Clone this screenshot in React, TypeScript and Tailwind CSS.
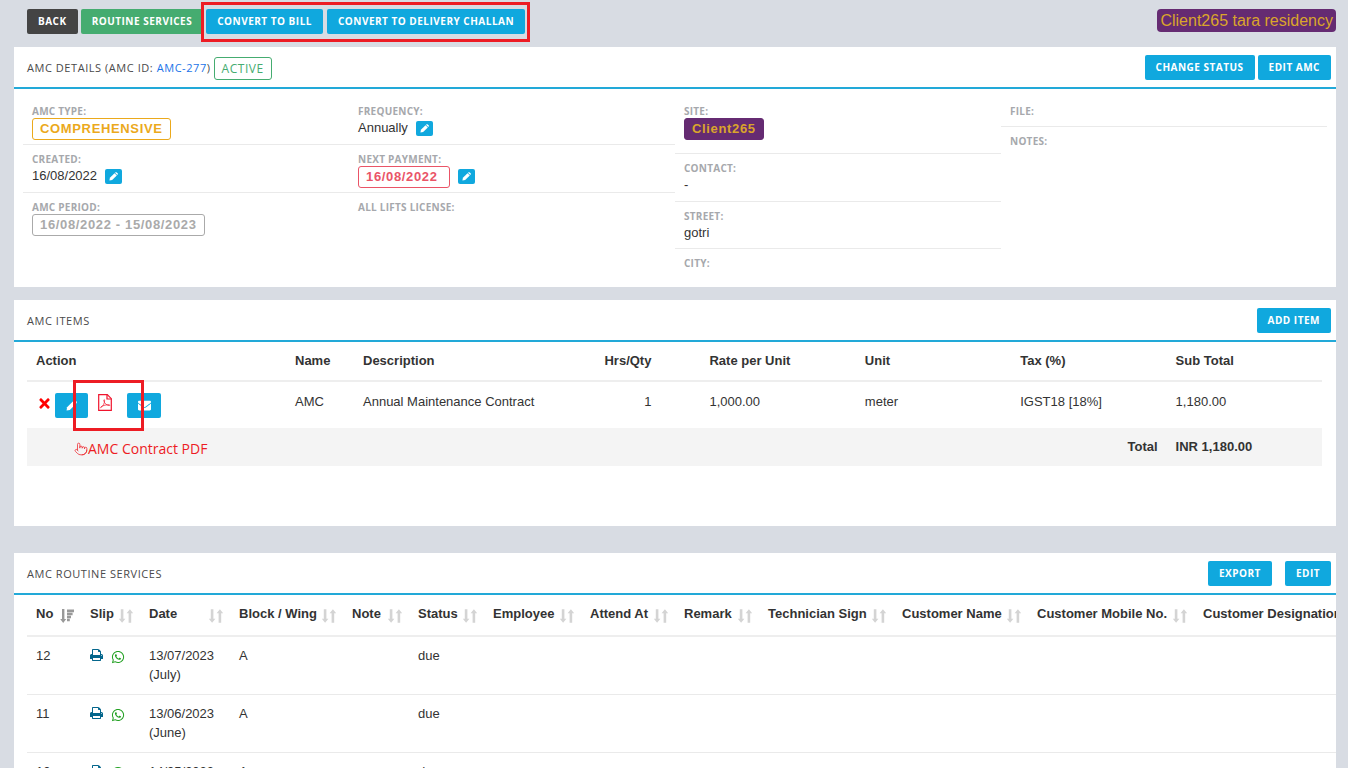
import React from 'react';
import { FaTimes, FaWhatsapp, FaEnvelope } from 'react-icons/fa';
import { Pointer } from 'lucide-react';

const arial = "font-['Liberation_Sans',Arial,sans-serif]";
const open = "font-['Open_Sans',sans-serif]";

function PencilIcon({ className }: { className: string }) {
  return (
    <svg viewBox="0 0 12 12" className={className} fill="currentColor" aria-hidden="true">
      <path d="M0.6 11.4 1.2 7.8 7.4 1.6 10.4 4.6 4.2 10.8Z" />
      <path d="M8 1 8.8 .4Q9.7 -.1 10.3.5L11.5 1.7Q12.1 2.3 11.6 3.2L11 4Z" />
    </svg>
  );
}

function PdfIcon() {
  return (
    <svg viewBox="0 0 14 17" className="h-[17px] w-[14px]" fill="none" stroke="#f0142d" strokeWidth="1.2" aria-hidden="true">
      <path d="M.7.7H9.3L13.3 4.7V16.3H.7Z" />
      <path d="M9 .7V5H13.3" />
      <path d="M2.8 13.6C5 12.4 6.8 9 6.6 6.2 6.5 5.2 5.6 5.6 5.8 6.6 6.2 9 8.4 11.2 11 11.6 12.2 11.7 12 10.7 11 10.7 8.6 10.6 5.2 11.4 3 12.8 2.2 13.4 2.4 13.9 2.8 13.6Z" strokeWidth=".7" />
    </svg>
  );
}

function PrintIcon() {
  return (
    <svg viewBox="0 128 1664 1536" className="h-3 w-[13px]" fill="#04668c" aria-hidden="true">
      <path d="M384 1536h896v-256h-896v256zM384 896h896v-384h-160q-40 0-68-28t-28-68v-160h-640v640zM1536 960q0-26-19-45t-45-19-45 19-19 45 19 45 45 19 45-19 19-45zM1664 960v416q0 13-9.5 22.5t-22.5 9.5h-224v160q0 40-28 68t-68 28h-960q-40 0-68-28t-28-68v-160h-224q-13 0-22.5-9.5t-9.5-22.5v-416q0-79 56.5-135.5t135.5-56.5h64v-544q0-40 28-68t68-28h672q40 0 88 20t76 48l152 152q28 28 48 76t20 88v256h64q79 0 135.5 56.5t56.5 135.5z" />
    </svg>
  );
}

function SortIcon({ active }: { active: boolean }) {
  return active ? (
    <svg viewBox="0 0 14 14" className="h-[14px] w-[14px] shrink-0" fill="#999" aria-hidden="true">
      <path d="M2 0H4.4V10H6.2L3.2 14 .2 10H2Z" />
      <path d="M7 .6H14V3.2H7ZM7 3.8H12.6V6.2H7ZM7 6.8H11V9.2H7ZM7 9.8H9.8V12.2H7Z" />
    </svg>
  ) : (
    <svg viewBox="0 0 14 14" className="h-[14px] w-[14px] shrink-0" fill="#d4d4d4" aria-hidden="true">
      <path d="M1.8 .2H4.4V9.8H6.4L3.1 13.8 -.2 9.8H1.8Z" />
      <path d="M9.6 13.8H12.2V4.2H14.2L10.9.2 7.6 4.2H9.6Z" />
    </svg>
  );
}

function Btn({ children, color = 'bg-[#10a8de]' }: { children: React.ReactNode; color?: string }) {
  return (
    <button type="button" className={`${open} ${color} h-[25px] shrink-0 rounded-xs px-[11px] text-[10px] leading-[25px] font-bold tracking-wider whitespace-nowrap text-white uppercase`}>
      {children}
    </button>
  );
}

function EditBtn({ label }: { label: string }) {
  return (
    <button type="button" aria-label={label} className="mt-[3px] flex h-[15px] w-[17px] items-center justify-center rounded-xs bg-[#10a8de] text-white">
      <PencilIcon className="h-[9px] w-[9px]" />
    </button>
  );
}

function PanelHead({ title, children }: { title: React.ReactNode; children: React.ReactNode }) {
  return (
    <header className="flex h-[42px] items-center justify-between border-b-2 border-[#22a9d8] pr-[5px] pl-[13px]">
      <h2 className={`${open} flex items-center gap-[3px] pt-[2px] text-[11px] tracking-wider text-[#4a4a4a] uppercase`}>{title}</h2>
      {children}
    </header>
  );
}

function Field({ label, children, size = 'h-12' }: { label: string; children?: React.ReactNode; size?: string }) {
  return (
    <div className={`${size} border-b border-[#eaeaea] px-[9px] pt-[7px] last:border-b-0`}>
      <dt className={`${open} text-[10px] leading-[14px] font-bold tracking-wide text-[#a6a8ac] uppercase`}>{label}:</dt>
      <dd className="flex items-start text-[13px] leading-5 text-[#333]">{children}</dd>
    </div>
  );
}

const badge = 'flex h-[22px] items-center rounded-[3px] border px-[7px] pb-[1px] text-[13px] font-bold tracking-wider whitespace-nowrap';

const services = [
  { no: 12, date: '13/07/2023', month: '(July)' },
  { no: 11, date: '13/06/2023', month: '(June)' },
  { no: 10, date: '14/05/2023', month: '(May)' },
];

const serviceColumns = [
  { label: 'No', width: 'w-[54px]' },
  { label: 'Slip', width: 'w-[59px]' },
  { label: 'Date', width: 'w-[90px]' },
  { label: 'Block / Wing', width: 'w-[113px]' },
  { label: 'Note', width: 'w-[66px]' },
  { label: 'Status', width: 'w-[75px]' },
  { label: 'Employee', width: 'w-[97px]' },
  { label: 'Attend At', width: 'w-[94px]' },
  { label: 'Remark', width: 'w-[84px]' },
  { label: 'Technician Sign', width: 'w-[134px]' },
  { label: 'Customer Name', width: 'w-[135px]' },
  { label: 'Customer Mobile No.', width: 'w-[166px]' },
  { label: 'Customer Designation', width: 'w-[170px]' },
];

export default function App() {
  return (
    <main className={`${arial} h-screen overflow-hidden bg-[#d8dce3] pr-3 pl-[14px] text-[13px] text-[#333]`}>
      <div className="flex h-[47px] items-start justify-between pt-[9px] pl-[13px]">
        <nav className="flex gap-[3px]">
          <Btn color="bg-[#444]">Back</Btn>
          <Btn color="bg-[#45ac70]">Routine Services</Btn>
          <div className="relative flex gap-1">
            <Btn>Convert to Bill</Btn>
            <Btn>Convert to Delivery Challan</Btn>
            <span className="pointer-events-none absolute -inset-x-[5px] -top-[7px] -bottom-2 border-3 border-[#ed1c24]" />
          </div>
        </nav>
        <span className="rounded-[4px] bg-[#652b72] px-[3px] text-[16px] leading-[23px] text-[#daa52b]">Client265 tara residency</span>
      </div>

      <section className="bg-white">
        <PanelHead
          title={
            <>
              <span>
                AMC Details (AMC ID: <a href="#amc-277" className="text-[#1a73e8]">AMC-277</a>)
              </span>
              <span className="rounded-[3px] border border-[#45ac70] px-[7px] text-[12px] leading-[21px] text-[#45ac70]">Active</span>
            </>
          }
        >
          <div className="flex gap-[3px]">
            <Btn>Change Status</Btn>
            <Btn>Edit AMC</Btn>
          </div>
        </PanelHead>
        <div className="grid h-[198px] grid-cols-4 px-[9px] pt-2">
          <dl>
            <Field label="AMC Type">
              <span className={`${badge} border-[#eba91c] text-[#eba91c]`}>COMPREHENSIVE</span>
            </Field>
            <Field label="Created">
              <span className="mr-2">16/08/2022</span>
              <EditBtn label="Edit created date" />
            </Field>
            <Field label="AMC Period">
              <span className={`${badge} border-[#aaa] text-[#aaa]`}>16/08/2022 - 15/08/2023</span>
            </Field>
          </dl>
          <dl>
            <Field label="Frequency">
              <span className="mr-2">Annually</span>
              <EditBtn label="Edit frequency" />
            </Field>
            <Field label="Next Payment">
              <span className={`${badge} mr-2 border-[#ea5467] pr-[11px] text-[#ea5467]`}>16/08/2022</span>
              <EditBtn label="Edit next payment" />
            </Field>
            <Field label="All Lifts License" />
          </dl>
          <dl>
            <Field label="Site" size="h-[57px]">
              <span className={`${badge} border-[#652b72] bg-[#652b72] text-[#daa52b]`}>Client265</span>
            </Field>
            <Field label="Contact">-</Field>
            <Field label="Street" size="h-[47px]">gotri</Field>
            <Field label="City" />
          </dl>
          <dl>
            <Field label="File" size="h-[30px]" />
            <Field label="Notes" />
          </dl>
        </div>
      </section>

      <section className="mt-[13px] h-[226px] bg-white">
        <PanelHead title="AMC Items">
          <Btn>Add Item</Btn>
        </PanelHead>
        <div className="pr-[14px] pl-[13px]">
          <table className="w-full table-fixed border-collapse text-left">
            <thead>
              <tr className="h-[39px] border-b-2 border-[#eee] [&>th]:px-[9px]">
                <th className="w-[20%]">Action</th>
                <th className="w-[68px]">Name</th>
                <th>Description</th>
                <th className="w-[12%]"><span className="block pr-10 text-right">Hrs/Qty</span></th>
                <th className="w-[12%]">Rate per Unit</th>
                <th className="w-[12%]">Unit</th>
                <th className="w-[12%]">Tax (%)</th>
                <th className="w-[12%]">Sub Total</th>
              </tr>
            </thead>
            <tbody>
              <tr className="h-[47px] align-top leading-5 [&>td]:px-[9px] [&>td]:pt-[10px]">
                <td>
                  <div className="relative flex items-start pt-px">
                    <button type="button" aria-label="Delete item" className="mt-[3px] mr-[3px] flex w-4 justify-center text-[#f00]"><FaTimes size={15} /></button>
                    <button type="button" aria-label="Edit item" className="flex h-[25px] w-[33px] items-center justify-center rounded-xs bg-[#10a8de] text-white">
                      <PencilIcon className="h-[11px] w-[11px]" />
                    </button>
                    <button type="button" aria-label="AMC contract PDF" className="mt-px mr-[15px] ml-[10px] flex"><PdfIcon /></button>
                    <button type="button" aria-label="Email item" className="flex h-[25px] w-[34px] items-center justify-center rounded-xs bg-[#10a8de] text-white">
                      <FaEnvelope size={13} />
                    </button>
                    <span className="pointer-events-none absolute -top-3 left-[37px] h-[51px] w-[71px] border-3 border-[#ed1c24]" />
                    <span className={`${open} pointer-events-none absolute top-[47px] left-[38px] flex items-center text-[14px] whitespace-nowrap text-[#ed1c24]`}>
                      <Pointer size={14} strokeWidth={1.25} />
                      AMC Contract PDF
                    </span>
                  </div>
                </td>
                <td>AMC</td>
                <td>Annual Maintenance Contract</td>
                <td><span className="block pr-10 text-right">1</span></td>
                <td>1,000.00</td>
                <td>meter</td>
                <td>IGST18 [18%]</td>
                <td>1,180.00</td>
              </tr>
            </tbody>
            <tfoot>
              <tr className="h-[38px] bg-[#f4f4f4] font-bold [&>td]:px-[9px]">
                <td colSpan={7} className="text-right">Total</td>
                <td>INR 1,180.00</td>
              </tr>
            </tfoot>
          </table>
        </div>
      </section>

      <section className="mt-[27px] bg-white">
        <PanelHead title="AMC Routine Services">
          <div className="flex gap-[13px]">
            <Btn>Export</Btn>
            <Btn>Edit</Btn>
          </div>
        </PanelHead>
        <div className="overflow-hidden pl-[13px]">
          <table className="w-full min-w-[1337px] table-fixed border-collapse text-left">
            <thead>
              <tr className="h-[41px] border-b-2 border-[#eee]">
                {serviceColumns.map((column, index) => (
                  <th key={column.label} className={`${column.width} pr-[7px] pb-[2px] pl-[9px] whitespace-nowrap`}>
                    <div className="flex items-center justify-between">
                      <span>{column.label}</span>
                      <span className="pt-1"><SortIcon active={index === 0} /></span>
                    </div>
                  </th>
                ))}
              </tr>
            </thead>
            <tbody>
              {services.map((service) => (
                <tr key={service.no} className="h-[58px] border-b border-[#eaeaea] align-top leading-[19px] [&>td]:pt-[9px] [&>td]:pl-[9px]">
                  <td>{service.no}</td>
                  <td>
                    <div className="flex gap-2 pt-[3px]">
                      <a href="#print" aria-label="Print slip"><PrintIcon /></a>
                      <a href="#whatsapp" aria-label="Share slip on WhatsApp" className="pt-px text-[#22a022]"><FaWhatsapp size={14} /></a>
                    </div>
                  </td>
                  <td>{service.date}<br />{service.month}</td>
                  <td>A</td>
                  <td />
                  <td>due</td>
                  <td colSpan={7} />
                </tr>
              ))}
            </tbody>
          </table>
        </div>
      </section>
    </main>
  );
}
